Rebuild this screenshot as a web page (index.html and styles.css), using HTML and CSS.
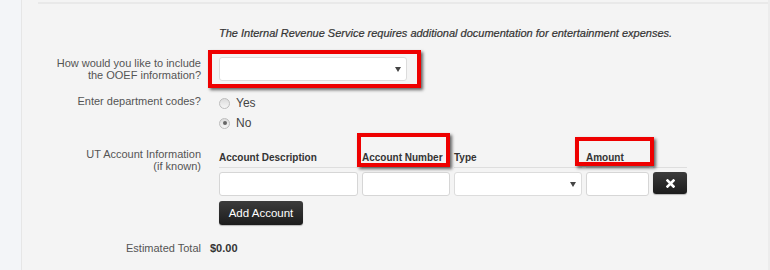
FILE: index.html
```html
<!DOCTYPE html>
<html lang="en">
<head>
  <meta charset="UTF-8" />
  <title>Entertainment expenses</title>
  <link rel="stylesheet" href="styles.css">
</head>
<body>
  <div class="page">
    <div class="sidebar"></div>
    <div class="main">
      <div class="rule"></div>

      <div class="row notice-row">
        <div class="label"></div>
        <div class="value field notice">The Internal Revenue Service requires additional documentation for entertainment expenses.</div>
      </div>

      <div class="row select-row">
        <div class="label">How would you like to include<br>the OOEF information?</div>
        <div class="value field">
          <span class="select wide hl hl-select"><select></select></span>
        </div>
      </div>

      <div class="row radio-row">
        <div class="label">Enter department codes?</div>
        <div class="value field radios">
          <label class="radio"><input type="radio" name="dept"> Yes</label>
          <label class="radio"><input type="radio" name="dept" checked> No</label>
        </div>
      </div>

      <div class="row account-row">
        <div class="label">UT Account Information<br>(if known)</div>
        <div class="value field">
          <div class="accounts">
            <div class="th">Account Description</div>
            <div class="th hl hl-number">Account Number</div>
            <div class="th">Type</div>
            <div class="th hl hl-amount">Amount</div>
            <div class="th"></div>

            <input class="input" type="text">
            <input class="input" type="text">
            <span class="select"><select></select></span>
            <input class="input" type="text">
            <button class="btn remove" type="button">
              <svg width="9" height="9" viewBox="0 0 9 9"><path d="M1.5 1.5 L7.5 7.5 M7.5 1.5 L1.5 7.5" stroke="#fff" stroke-width="2.6" stroke-linecap="square"/></svg>
            </button>
          </div>
          <button class="btn add" type="button">Add Account</button>
        </div>
      </div>

      <div class="row total-row">
        <div class="label">Estimated Total</div>
        <div class="value total">$0.00</div>
      </div>
    </div>
  </div>
</body>
</html>
```

FILE: styles.css
```css
body {
  margin: 0;
  font-family: "Liberation Sans", Arial, sans-serif;
  font-size: 11px;
  background-color: #f4f4f4;
  color: #444;
  overflow: hidden;
}

.page {
  display: flex;
  min-height: 100vh;
}

.sidebar {
  width: 21px;
  background-color: #f3f5f8;
  border-right: 1px solid #e6e6e6;
}

.main {
  flex: 1;
  padding-top: 2px;
  border-right: 2px solid #ececec;
}

.rule {
  height: 2px;
  margin-left: 16px;
  background-color: #e9e9e9;
}

.row {
  display: grid;
  grid-template-columns: 179px 1fr;
  column-gap: 9px;
}

.label {
  text-align: right;
  line-height: 12px;
  color: #555;
}

.field {
  padding-left: 9px;
}

/* rows */
.notice-row {
  margin-top: 22px;
}

.notice {
  font-style: italic;
  color: #333;
  line-height: 14px;
  -webkit-text-stroke: 0.2px #333;
}

.select-row {
  margin-top: 17px;
}

.radio-row {
  margin-top: 12px;
}

.radio-row .label {
  padding-top: 2px;
}

.radios {
  display: flex;
  flex-direction: column;
}

.radio {
  display: flex;
  align-items: center;
  height: 20px;
  font-size: 12px;
  color: #444;
}

.radio input {
  appearance: none;
  width: 11px;
  height: 11px;
  margin: 0 6px 0 0;
  border: 1px solid #bdbdbd;
  border-radius: 50%;
  background: linear-gradient(#dcdcdc, #f6f6f6);
  position: relative;
}

.radio input:checked::after {
  content: "";
  position: absolute;
  left: 2.5px;
  top: 2.5px;
  width: 4px;
  height: 4px;
  border-radius: 50%;
  background-color: #666;
}

.account-row {
  margin-top: 15px;
}

/* form controls */
.select {
  display: inline-block;
  position: relative;
  height: 24px;
}

.select select {
  appearance: none;
  width: 100%;
  height: 100%;
  border: 1px solid #dcdcdc;
  border-radius: 3px;
  background-color: #fff;
  box-sizing: border-box;
}

.select::after {
  content: "";
  position: absolute;
  right: 6px;
  top: 10px;
  border-left: 3px solid transparent;
  border-right: 3px solid transparent;
  border-top: 5px solid #444;
}

.wide {
  width: 188px;
  display: block;
}

.input {
  height: 24px;
  border: 1px solid #d6d6d6;
  border-radius: 3px;
  background-color: #fff;
  box-sizing: border-box;
  padding: 0;
}

.accounts {
  display: grid;
  grid-template-columns: 139px 88px 128px 63px 34px;
  column-gap: 4px;
  row-gap: 4px;
  width: max-content;
}

.th {
  font-weight: bold;
  font-size: 10px;
  color: #333;
  line-height: 19px;
  white-space: nowrap;
  border-bottom: 1px solid #dedede;
}

.btn {
  border: none;
  border-radius: 3px;
  background: linear-gradient(#3c3c3c, #1c1c1c);
  color: #fff;
  font-family: inherit;
  cursor: pointer;
  box-shadow: 0 1px 1px rgba(0, 0, 0, 0.25);
}

.remove {
  height: 22px;
  display: flex;
  align-items: center;
  justify-content: center;
}

.add {
  display: block;
  margin-top: 5px;
  width: 84px;
  height: 24px;
  font-size: 11.5px;
  padding: 0;
}

.total-row {
  margin-top: 17px;
}

.total {
  font-weight: bold;
  color: #333;
  line-height: 12px;
}

/* red highlight frames drawn over the form */
.hl {
  position: relative;
}

.hl::before {
  content: "";
  position: absolute;
  border: 4px solid #ee0000;
  box-shadow: 2px 2px 3px rgba(0, 0, 0, 0.6);
  pointer-events: none;
  z-index: 2;
}

.hl-select::before {
  top: -7px;
  left: -11px;
  right: -14px;
  bottom: -7px;
}

.hl-number::before {
  top: -15px;
  left: -5px;
  right: 0;
  bottom: 0;
}

.hl-amount::before {
  top: -11px;
  left: -11px;
  right: -5px;
  bottom: 1px;
}
```
